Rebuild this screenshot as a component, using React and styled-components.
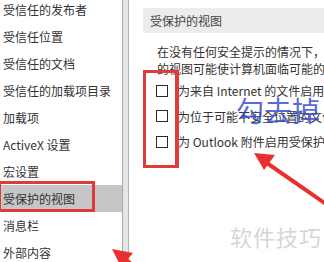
import React from "react";
import styled, { createGlobalStyle } from "styled-components";

const Global = createGlobalStyle`
  html, body { margin: 0; padding: 0; background: #fff; }
  body {
    width: 324px; height: 262px; overflow: hidden;
    font-family: "Noto Sans CJK SC", "Liberation Sans", sans-serif;
  }
`;

const Screen = styled.div`
  position: relative;
  display: flex;
  width: 324px;
  height: 262px;
  overflow: hidden;
  background: #fff;
`;

const Sidebar = styled.ul`
  list-style: none;
  margin: -4px 0 0;
  padding: 0;
  width: 122px;
  flex: none;
`;

const NavItem = styled.li`
  position: relative;
  height: 27px;
  line-height: 27px;
  padding-left: 3px;
  font-size: 12px;
  color: #333;
  white-space: nowrap;
  background: ${(p) => (p.$active ? "#c6c6c6" : "transparent")};
`;

const Mark = styled.div`
  position: absolute;
  left: -2px;
  top: -4px;
  width: 97px;
  height: 31px;
  box-sizing: border-box;
  border: 3px solid #e03a3a;
`;

const Scrollbar = styled.div`
  flex: none;
  width: 7px;
  height: 262px;
  box-sizing: border-box;
  background: #e6e6e6;
  border-left: 1px solid #a9a9a9;
  border-right: 1px solid #b4b4b4;
`;

const Panel = styled.div`
  position: relative;
  flex: 1;
  min-width: 0;
  overflow: hidden;
  padding-top: 8px;
`;

const Header = styled.div`
  margin-left: 14px;
  height: 25px;
  line-height: 25px;
  padding-left: 7px;
  background: #ececec;
  font-size: 12px;
  color: #444;
  white-space: nowrap;
`;

const Para = styled.div`
  margin: 10px 0 0 28px;
  font-size: 12px;
  line-height: 17px;
  color: #333;
  white-space: nowrap;
`;

const Options = styled.div`
  margin: 1px 0 0 27px;
  display: flex;
  flex-direction: column;
`;

const Option = styled.label`
  display: flex;
  align-items: center;
  height: 25.5px;
  gap: 10px;
  font-size: 12px;
  color: #333;
  white-space: nowrap;
`;

const Box = styled.span`
  flex: none;
  width: 12px;
  height: 12px;
  box-sizing: border-box;
  border: 1px solid #2a2a2a;
  background: #fff;
`;

const BoxMark = styled.div`
  position: absolute;
  left: 14px;
  top: 70px;
  width: 36px;
  height: 98px;
  box-sizing: border-box;
  border: 3px solid #e03a3a;
  border-right-width: 4px;
`;

const Scribble = styled.div`
  position: absolute;
  left: 107px;
  top: 92px;
  font-size: 28px;
  line-height: 36px;
  letter-spacing: 0px;
  color: rgba(52, 72, 205, 0.82);
  white-space: nowrap;
`;

const Watermark = styled.div`
  position: absolute;
  left: 101px;
  top: 221px;
  font-size: 22px;
  line-height: 30px;
  letter-spacing: 1px;
  color: #d6d6d6;
  white-space: nowrap;
`;

const Arrows = styled.svg`
  position: absolute;
  left: 0;
  top: 0;
  width: 324px;
  height: 262px;
  pointer-events: none;
`;

const items = [
  "受信任的发布者",
  "受信任位置",
  "受信任的文档",
  "受信任的加载项目录",
  "加载项",
  "ActiveX 设置",
  "宏设置",
  "受保护的视图",
  "消息栏",
  "外部内容",
];

const options = [
  "为来自 Internet 的文件启用受保护的视图",
  "为位于可能不安全位置的文件启用受保护的视图",
  "为 Outlook 附件启用受保护的视图",
];

export default function App() {
  return (
    <>
      <Global />
      <Screen>
        <Sidebar>
          {items.map((t, i) => (
            <NavItem key={t} $active={i === 7}>
              {t}
              {i === 7 && <Mark />}
            </NavItem>
          ))}
        </Sidebar>
        <Scrollbar />
        <Panel>
          <Header>受保护的视图</Header>
          <Para>
            在没有任何安全提示的情况下，受保护
            <br />
            的视图可能使计算机面临可能的安全威胁。
          </Para>
          <Options>
            {options.map((o) => (
              <Option key={o}>
                <Box />
                {o}
              </Option>
            ))}
          </Options>
          <BoxMark />
          <Scribble>勾去掉</Scribble>
          <Watermark>软件技巧</Watermark>
        </Panel>
        <Arrows viewBox="0 0 324 262">
          <line x1="336" y1="211" x2="264" y2="161" stroke="#e8302e" strokeWidth="4" />
          <polygon points="254,153 264,170 275,155" fill="#e8302e" />
          <line x1="150" y1="280" x2="124" y2="258" stroke="#e8302e" strokeWidth="4" />
          <polygon points="112,249 121,267 133,253" fill="#e8302e" />
        </Arrows>
      </Screen>
    </>
  );
}
